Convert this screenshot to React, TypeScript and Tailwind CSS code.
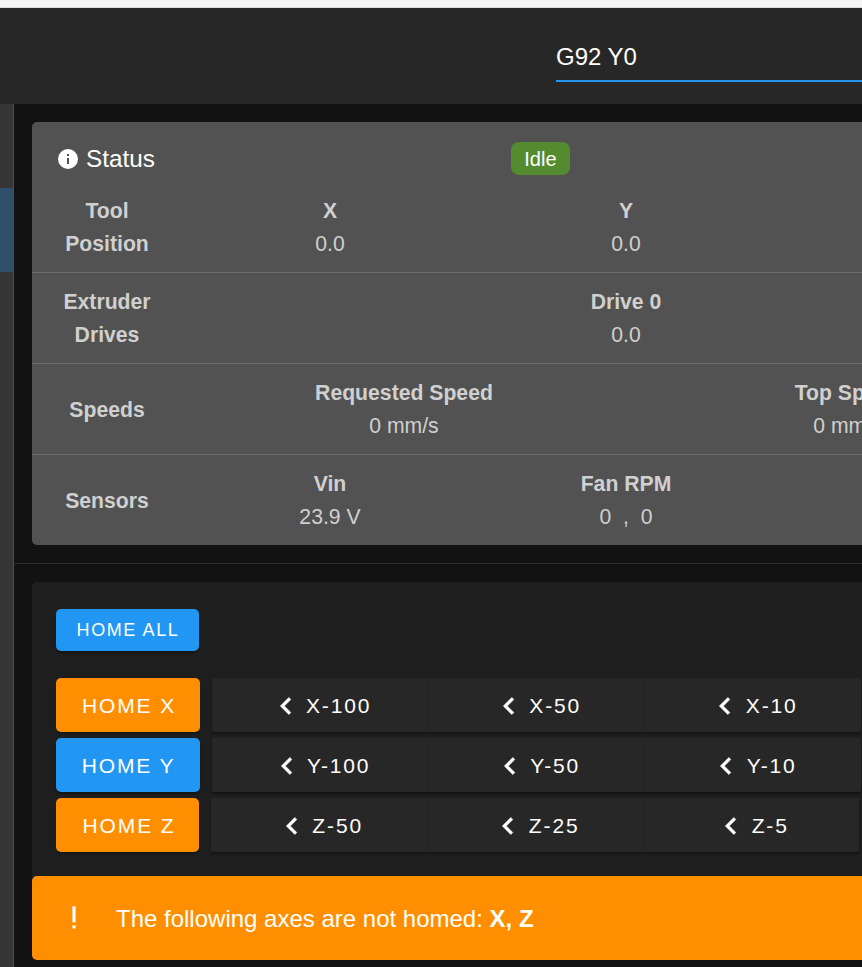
const MDI_CHEVRON = "M15.41,16.58L10.83,12L15.41,7.41L14,6L8,12L14,18L15.41,16.58Z";
const MDI_INFO = "M13,9H11V7H13M13,17H11V11H13M12,2A10,10 0 0,0 2,12A10,10 0 0,0 12,22A10,10 0 0,0 12,2Z";

function Stat({ label, value, width }: { label: string; value: React.ReactNode; width: string }) {
  return (
    <div className={`${width} shrink-0 text-center`}>
      <div className="font-bold">{label}</div>
      <div>{value}</div>
    </div>
  );
}

function Row({ label, children, last }: { label: React.ReactNode; children: React.ReactNode; last?: boolean }) {
  return (
    <div className={`flex items-center py-3 leading-[33px] ${last ? "" : "border-b border-[#6b6b6b]"}`}>
      <div className="w-[150px] shrink-0 text-center font-bold">{label}</div>
      {children}
    </div>
  );
}

function MoveCell({ label, divider, width }: { label: string; divider?: boolean; width: string }) {
  return (
    <div className={`flex h-full ${width} shrink-0 items-center justify-center pt-[2px] ${divider ? "border-l border-[#232323]" : ""}`}>
      <svg viewBox="0 0 24 24" className="mr-[3.4px] h-[34px] w-[34px] shrink-0 fill-white stroke-white stroke-[0.4]">
        <path d={MDI_CHEVRON} />
      </svg>
      <span className="tracking-[1.875px]">{label}</span>
    </div>
  );
}

function AxisRow({ home, color, width, cells, lastWidth, shift }: { home: string; color: string; width: string; cells: string[]; lastWidth: string; shift: string }) {
  return (
    <div className="flex h-[54px] gap-3 text-[21px] text-white">
      <div className={`flex ${width} shrink-0 items-center justify-center rounded-[5px] ${shift} pt-[2px] ${color} tracking-[1.875px] shadow-[0_2px_2px_rgba(0,0,0,0.3)]`}>
        {home}
      </div>
      <div className="flex shrink-0 items-center rounded-[2px] bg-[#272727] shadow-[0_2px_2px_rgba(0,0,0,0.35)]">
        {cells.map((c, i) => (
          <MoveCell key={c} label={c} divider={i > 0} width={i === 2 ? lastWidth : "w-[216px]"} />
        ))}
      </div>
    </div>
  );
}

export default function App() {
  return (
    <div className="h-[967px] w-[862px] overflow-hidden bg-[#121212] font-['Liberation_Sans',Arial,sans-serif]">
      <div className="h-2 border-b border-[#dcdcdc] bg-[#f5f5f5]" />
      <header className="flex h-[96px] items-start bg-[#272727] pl-[556px]">
        <div className="mt-[30px] w-[400px] shrink-0 border-b-2 border-[#2196f3] pb-[4px] text-2xl leading-[38px] text-white">
          G92 Y0
        </div>
      </header>
      <div className="flex h-[863px]">
        <aside className="w-[14px] shrink-0 border-r border-[#4e4e4e] bg-[#363636] pt-[84px]">
          <div className="h-[84px] bg-[#2f4f68]" />
        </aside>
        <main className="w-[1100px] shrink-0 px-[18px] pt-[18px]">
          <section className="rounded-[5px] bg-[#525252] text-[21.2px] text-[#d0d0d0]">
            <div className="flex items-center px-[24px] pb-[7px] pt-5">
              <svg viewBox="0 0 24 24" className="h-6 w-6 shrink-0 fill-white">
                <path d={MDI_INFO} fillRule="evenodd" />
              </svg>
              <span className="ml-[6px] text-[24.3px] leading-8 text-white">Status</span>
              <span className="ml-[356px] flex h-[33px] w-[59px] items-center justify-center rounded-lg bg-[#558b2f] text-xl text-white">
                Idle
              </span>
            </div>
            <Row label={<>Tool<br />Position</>}>
              <Stat label="X" value="0.0" width="w-[296px]" />
              <Stat label="Y" value="0.0" width="w-[296px]" />
              <Stat label="Z" value="0.0" width="w-[296px]" />
            </Row>
            <Row label={<>Extruder<br />Drives</>}>
              <Stat label="Drive 0" value="0.0" width="w-[888px]" />
            </Row>
            <Row label="Speeds">
              <Stat label="Requested Speed" value="0 mm/s" width="w-[444px]" />
              <Stat label="Top Speed" value="0 mm/s" width="w-[444px]" />
            </Row>
            <Row label="Sensors" last>
              <Stat label="Vin" value="23.9 V" width="w-[296px]" />
              <Stat label="Fan RPM" value={<span className="whitespace-pre">0  ,  0</span>} width="w-[296px]" />
              <div className="w-[296px] shrink-0" />
            </Row>
          </section>
          <hr className="-mx-[18px] my-[18px] border-[#2c2c2c]" />
          <section className="rounded-[5px] bg-[#1e1e1e]">
            <div className="flex flex-col px-6 pb-6 pt-[27px]">
              <div className="flex h-[42px] w-[143px] items-center justify-center rounded-[5px] bg-[#2196f3] pl-[1px] text-lg tracking-[1.6px] text-white shadow-[0_2px_2px_rgba(0,0,0,0.3)]">
                HOME ALL
              </div>
              <div className="mt-[27px] flex flex-col gap-[6px]">
                <AxisRow home="HOME X" color="bg-[#ff8f00]" width="w-[144px]" cells={["X-100", "X-50", "X-10"]} lastWidth="w-[217px]" shift="pl-[2px]" />
                <AxisRow home="HOME Y" color="bg-[#2196f3]" width="w-[144px]" cells={["Y-100", "Y-50", "Y-10"]} lastWidth="w-[217px]" shift="pl-[1px]" />
                <AxisRow home="HOME Z" color="bg-[#ff8f00]" width="w-[143px]" cells={["Z-50", "Z-25", "Z-5"]} lastWidth="w-[216px]" shift="pl-[3px]" />
              </div>
            </div>
            <div className="flex h-[84px] items-center rounded-[5px] bg-[#ff8f00] pt-[2px] text-2xl text-white">
              <svg viewBox="0 0 24 24" className="ml-[23px] h-[38px] w-[38px] shrink-0 fill-white">
                <path d="M11,4H13V14H11V4M11,16H13V18H11V16Z" />
              </svg>
              <span className="ml-[23px]">
                The following axes are not homed: <b>X, Z</b>
              </span>
            </div>
          </section>
        </main>
      </div>
    </div>
  );
}
